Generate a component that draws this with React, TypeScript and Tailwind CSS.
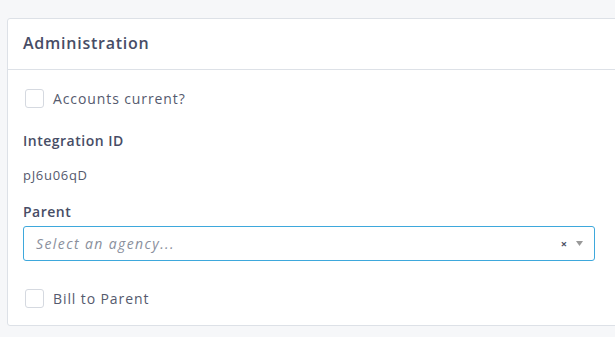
import React from "react";

function Checkbox({ label }: { label: string }) {
  return (
    <label className="flex items-center gap-x-[9px] ml-[2px]">
      <span className="w-[19px] h-[19px] rounded-[3px] border border-[#d5d9e0] bg-white" />
      <span className="text-[14px] text-[#555a6e] tracking-[0.9px]">{label}</span>
    </label>
  );
}

export default function App() {
  return (
    <div
      className="w-[615px] h-[337px] overflow-hidden bg-[#f6f7f9] pt-[18px] pl-[7px]"
      style={{ fontFamily: '"Open Sans", sans-serif' }}
    >
      <div className="w-[640px] bg-white border border-[#dde1e7] rounded-[3px]">
        <div className="h-[51px] flex items-center pl-[15px] pb-[3px] border-b border-[#dde1e7]">
          <h2 className="text-[16px] font-semibold text-[#474d66] tracking-[0.75px]">Administration</h2>
        </div>

        <div className="pl-[15px] pt-[18px] pb-[16px]">
          <Checkbox label="Accounts current?" />

          <p className="mt-[21px] text-[14px] font-semibold text-[#474d66] tracking-[0.5px]">Integration ID</p>
          <p className="mt-[15px] text-[13px] text-[#555a6e] tracking-[0.7px]">pJ6u06qD</p>

          <p className="mt-[15px] text-[14px] font-semibold text-[#474d66] tracking-[0.5px]">Parent</p>
          <div className="mt-[4px] w-[572px] h-[35px] rounded-[3px] border border-[#3ea8dc] flex items-center pl-[12px] pr-[11px]">
            <span className="flex-1 text-[14px] italic text-[#8a8f9c] tracking-[1.4px]">Select an agency...</span>
            <span className="text-[11px] font-bold text-[#4a4f63] leading-none">×</span>
            <svg className="ml-[9px]" width="7" height="5" viewBox="0 0 7 5">
              <path d="M0 0H7L3.5 5Z" fill="#999" />
            </svg>
          </div>

          <div className="mt-[27px]">
            <Checkbox label="Bill to Parent" />
          </div>
        </div>
      </div>
    </div>
  );
}
